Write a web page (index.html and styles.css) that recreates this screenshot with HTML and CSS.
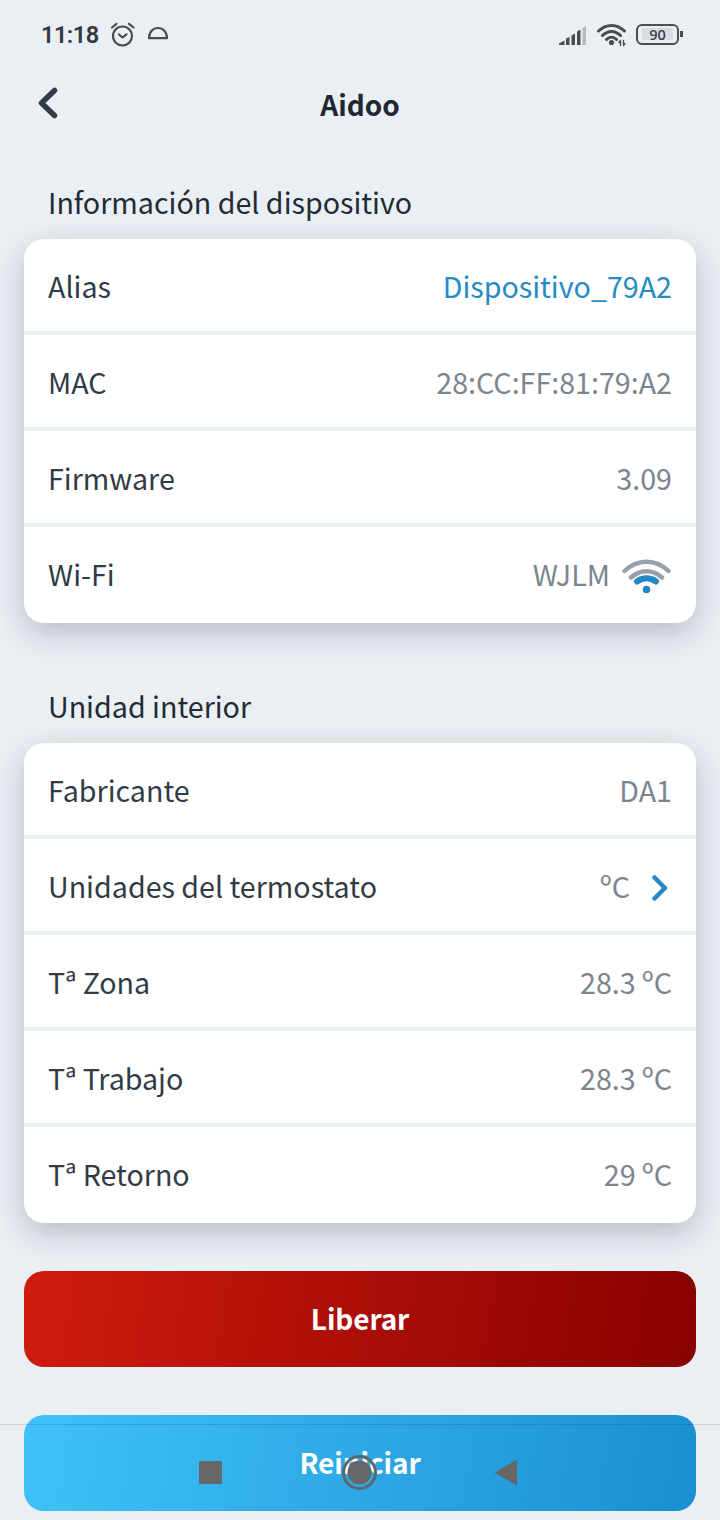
FILE: index.html
```html
<!DOCTYPE html>
<html lang="es">
<head>
    <meta charset="UTF-8">
    <meta name="viewport" content="width=device-width, initial-scale=1.0">
    <title>Aidoo</title>
    <link rel="stylesheet" href="styles.css">
</head>
<body>
    <div class="status-bar">
        <span class="clock">11:18</span>
        <svg class="alarm" width="26" height="26" viewBox="0 0 26 26">
            <circle cx="12.500" cy="14" r="9.500"/>
            <path d="M9 12.500l3.500 3 4-3.200M2 5.500l4.500-3.700M23.500 5.500l-4.500-3.700"/>
        </svg>
        <svg class="dome" width="22" height="14" viewBox="0 0 22 14">
            <path d="M2 12.200C2 6 6 2 11 2s9 4 9 10.200z"/>
        </svg>
        <svg class="signal" width="28" height="20" viewBox="0 0 28 20">
            <path d="M0 19v-1.500l5.500-3V19zM7 12.500l3.500-1.500v8H7zM12.500 9.500l3.500-2V19h-3.500zM18 5.500l3.500-2V19H18z"/>
            <path class="weak" d="M23.500 2l3.500-2v19h-3.500z"/>
        </svg>
        <svg class="wifi-status" width="30" height="24" viewBox="0 0 30 24">
            <path d="M1.500 8C9 .5 20 .5 27.500 8M5.500 12.500C11 7 18 7 23.500 12.500M9.500 16.500C12.500 13.500 16.500 13.500 19.500 16.500"/>
            <circle cx="14.500" cy="19.500" r="2.600"/>
            <path class="arrows" d="M23.500 22.500v-5l-1.500 2M26.500 17.500v5l1.500-2"/>
        </svg>
        <div class="battery"><span>90</span></div>
    </div>

    <header>
        <svg class="back" width="24" height="34" viewBox="0 0 24 34">
            <path d="M18.500 4.500L5.500 17l13 12.500"/>
        </svg>
        <h1>Aidoo</h1>
    </header>

    <main>
        <h2>Información del dispositivo</h2>
        <div class="card">
            <div class="row"><span>Alias</span><span class="value link">Dispositivo_79A2</span></div>
            <div class="row"><span>MAC</span><span class="value">28:CC:FF:81:79:A2</span></div>
            <div class="row"><span>Firmware</span><span class="value">3.09</span></div>
            <div class="row">
                <span>Wi-Fi</span>
                <span class="value">WJLM
                    <svg class="wifi" width="50" height="36" viewBox="0 0 50 36">
                        <path d="M2.500 12C15-.5 34-.5 46.500 12M9 18.500C18 10 31 10 40 18.500"/>
                        <path class="on" d="M15 22.500C20.500 18.300 28.500 18.300 34 22.500"/>
                        <circle cx="24.500" cy="30.500" r="3.800"/>
                    </svg>
                </span>
            </div>
        </div>

        <h2>Unidad interior</h2>
        <div class="card">
            <div class="row"><span>Fabricante</span><span class="value">DA1</span></div>
            <div class="row">
                <span>Unidades del termostato</span>
                <span class="value">ºC
                    <svg class="next" width="20" height="28" viewBox="0 0 20 28">
                        <path d="M2.500 3.500L13 14 2.500 24.500"/>
                    </svg>
                </span>
            </div>
            <div class="row"><span>Tª Zona</span><span class="value">28.3 ºC</span></div>
            <div class="row"><span>Tª Trabajo</span><span class="value">28.3 ºC</span></div>
            <div class="row"><span>Tª Retorno</span><span class="value">29 ºC</span></div>
        </div>

        <button class="btn release">Liberar</button>
        <button class="btn restart">Reiniciar</button>
    </main>

    <!-- system navigation, floats over the page -->
    <nav class="nav-bar">
        <svg width="26" height="26" viewBox="0 0 26 26"><rect x="1" y="1" width="23" height="23" rx="1.500"/></svg>
        <svg width="36" height="36" viewBox="0 0 36 36">
            <circle cx="18.500" cy="17.500" r="12"/>
            <circle class="ring" cx="18.500" cy="17.500" r="16"/>
        </svg>
        <svg width="26" height="28" viewBox="0 0 26 28"><path d="M.5 13.500L23 .5v26z"/></svg>
    </nav>
</body>
</html>
```
FILE: styles.css
```css
* {
    box-sizing: border-box;
}
body {
    position: relative;
    height: 1520px;
    margin: 0;
    overflow: hidden;
    background: #eaeff4;
    color: #303b47;
    font-family: "Noto Sans CJK SC", sans-serif;
    font-size: 28.65px;
}
svg {
    display: block;
    fill: none;
    stroke-linecap: round;
    stroke-linejoin: round;
}
.status-bar {
    display: flex;
    align-items: center;
    height: 70px;
    padding: 0 41px 0 41px;
    color: #34383c;
}
.clock {
    width: 69px;
    font-family: Roboto, sans-serif;
    font-size: 23.5px;
    font-weight: 600;
    letter-spacing: -0.5px;
}
.alarm, .dome {
    stroke: #484c50;
    stroke-width: 2.2;
}
.dome {
    margin: -4px 0 0 11px;
}
.signal {
    margin: 1px 10px 0 auto;
    fill: #484c50;
}
.signal .weak {
    fill: #b7bbbf;
}
.wifi-status {
    margin-right: 9px;
    stroke: #484c50;
    stroke-width: 3;
}
.wifi-status circle {
    fill: #484c50;
    stroke: none;
}
.wifi-status .arrows {
    stroke-width: 1.3;
}
.battery {
    position: relative;
    width: 43px;
    height: 21px;
    margin-top: -1px;
    padding: 2px 4px;
    border: 2.5px solid #4b4f53;
    border-radius: 6px;
    font-family: "Noto Sans", sans-serif;
    font-size: 14.5px;
    font-weight: 500;
    line-height: 12px;
    text-align: center;
}
.battery span {
    display: block;
    background: #d8dce0;
}
.battery::after {
    content: "";
    position: absolute;
    top: 5px;
    right: -6px;
    width: 3px;
    height: 6px;
    background: #4b4f53;
}
header {
    display: grid;
    grid-template-columns: 60px 1fr 60px;
    align-items: center;
    height: 70px;
    padding: 0 36px;
}
.back {
    margin-top: -5px;
    stroke: #303b47;
    stroke-width: 5.5;
}
h1 {
    height: 70px;
    margin: 0;
    color: #1f2733;
    font-size: 28px;
    font-weight: 700;
    line-height: 69px;
    text-align: center;
}
main {
    padding: 27px 24px 0;
}
h2 {
    height: 72px;
    margin: 0;
    padding-left: 24px;
    color: #222a33;
    font-size: 28.65px;
    font-weight: 400;
    line-height: 69px;
}
.card {
    margin-bottom: 48px;
    overflow: hidden;
    background: #fff;
    border-radius: 20px;
    box-shadow: 0 10px 30px rgba(48, 59, 71, 0.27);
}
.row {
    display: flex;
    justify-content: space-between;
    height: 96px;
    padding: 0 24px;
    line-height: 93px;
    box-shadow: inset 0 -4px #eaeff4;
}
.row:last-child {
    box-shadow: none;
}
.value {
    display: flex;
    color: #7b858f;
}
.link {
    color: #258bc2;
}
.wifi {
    margin: 32px 0 0 12px;
    stroke: #98a0ac;
    stroke-width: 4.5;
}
.wifi .on {
    stroke: #2489c4;
    stroke-width: 6;
}
.wifi circle {
    fill: #2489c4;
    stroke: none;
}
.next {
    margin: 35px 0 0 22px;
    stroke: #2489c4;
    stroke-width: 4.5;
}
.btn {
    display: block;
    width: 100%;
    height: 96px;
    margin-bottom: 48px;
    padding: 0 0 1px;
    border: 0;
    border-radius: 20px;
    color: #fff;
    font-family: inherit;
    font-size: 28px;
    font-weight: 700;
    letter-spacing: -0.1px;
    line-height: 95px;
}
.release {
    background: linear-gradient(100deg, #d01c0f, #870000);
}
.restart {
    background: linear-gradient(100deg, #40c2f8, #1a8fd2);
}
.nav-bar {
    position: absolute;
    left: 0;
    right: 0;
    bottom: 0;
    display: flex;
    align-items: center;
    justify-content: center;
    gap: 117px;
    height: 96px;
    padding-right: 2px;
    border-top: 1px solid rgba(0, 0, 0, 0.12);
}
.nav-bar svg {
    fill: #676767;
}
.nav-bar .ring {
    fill: none;
    stroke: #5b666d;
    stroke-width: 3;
}
```
